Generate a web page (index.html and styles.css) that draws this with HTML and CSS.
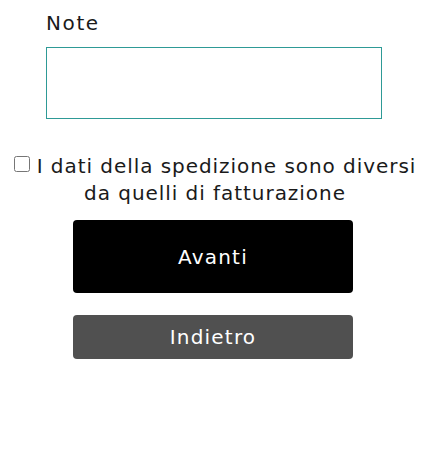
FILE: index.html
```html
<!DOCTYPE html>
<html lang="it">
<head>
<meta charset="utf-8">
<link rel="stylesheet" href="styles.css">
</head>
<body>
<form class="form">
  <div class="field">
    <label class="field-label" for="note">Note</label>
    <textarea id="note" class="note-input"></textarea>
  </div>
  <div class="check-row">
    <input type="checkbox" id="diff" class="check"><label for="diff">I dati della spedizione sono diversi da quelli di fatturazione</label>
  </div>
  <div class="actions">
    <button type="button" class="btn btn-primary">Avanti</button>
    <button type="button" class="btn btn-secondary">Indietro</button>
  </div>
</form>
</body>
</html>
```
FILE: styles.css
```css
html, body {
  margin: 0;
  padding: 0;
  background: #fff;
}
body {
  font-family: "DejaVu Sans", "Noto Sans", sans-serif;
  font-size: 20px;
  letter-spacing: 0.95px;
  color: #1a1a1a;
}
.form {
  width: 426px;
  display: flex;
  flex-direction: column;
  align-items: center;
  padding-top: 8px;
}
.field {
  width: 336px;
  margin-left: 2px;
  display: flex;
  flex-direction: column;
}
.field-label {
  font-size: 20px;
  line-height: 30px;
  padding-left: 0;
  margin-bottom: 9px;
  letter-spacing: 1.6px;
}
.note-input {
  box-sizing: border-box;
  width: 336px;
  height: 72px;
  border: 1px solid #2e9a96;
  border-radius: 0;
  margin: 0;
  resize: none;
  outline: none;
}
.check-row {
  margin-top: 34px;
  padding: 0 3px 0 7px;
  text-align: center;
  line-height: 27px;
}
.check {
  width: 16px;
  height: 16px;
  margin: 0 7px 0 0;
  vertical-align: 1px;
}
.actions {
  margin-top: 13px;
  display: flex;
  flex-direction: column;
  align-items: center;
  gap: 22px;
}
.btn {
  width: 280px;
  border: 0;
  border-radius: 4px;
  color: #fff;
  font-family: inherit;
  font-size: 20px;
  letter-spacing: 1.2px;
}
.btn-primary {
  height: 73px;
  background: #000;
}
.btn-secondary {
  height: 44px;
  background: #505050;
}
```
